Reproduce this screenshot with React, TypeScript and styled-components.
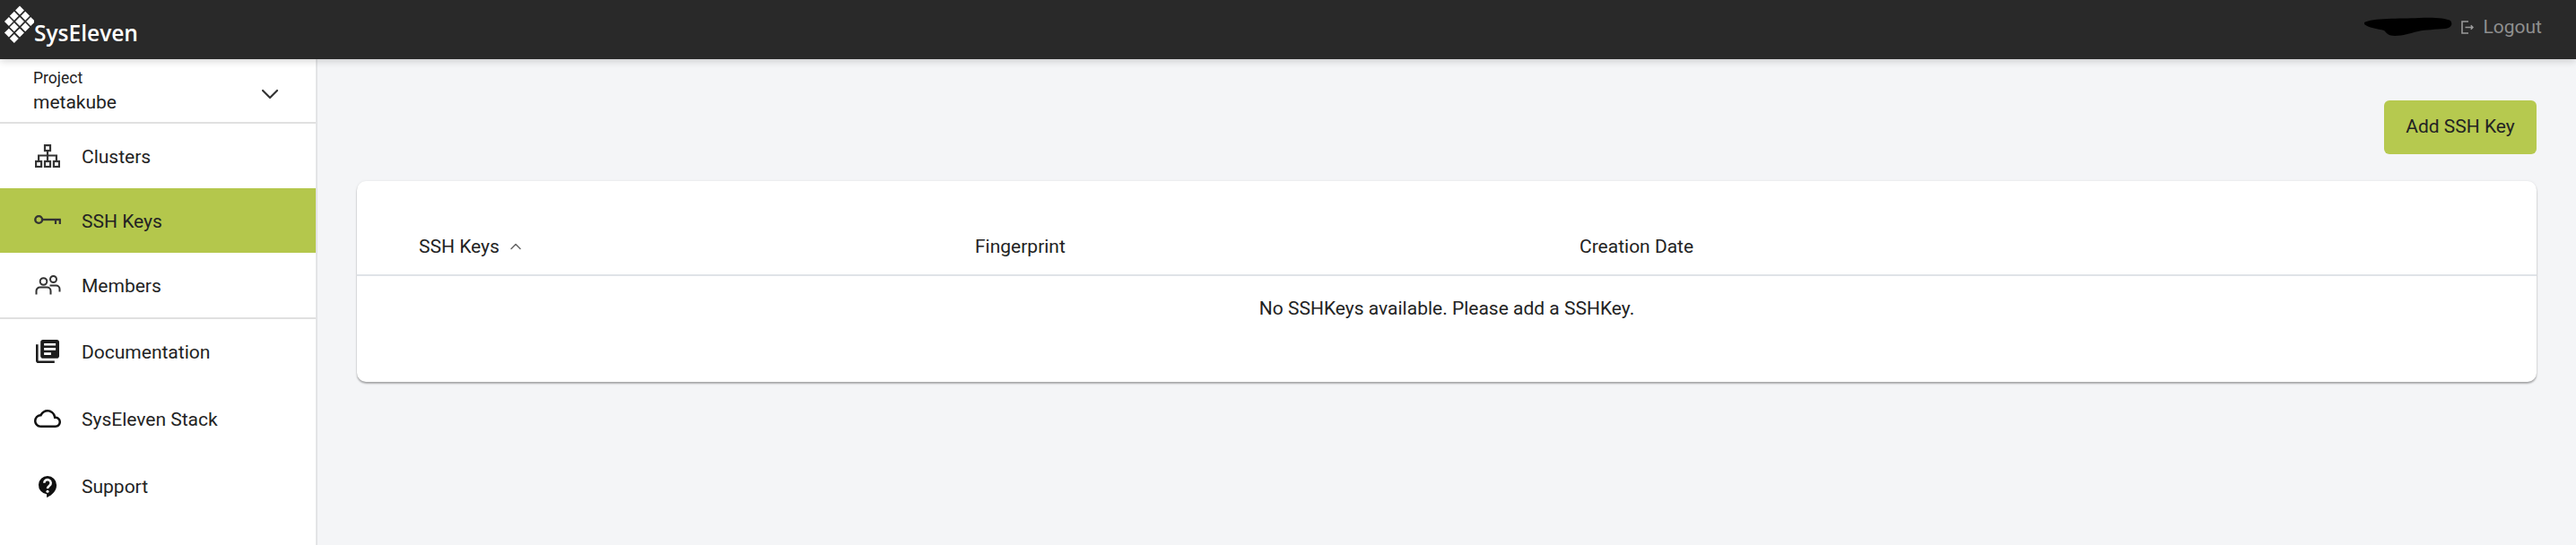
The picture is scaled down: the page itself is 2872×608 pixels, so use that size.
import { createGlobalStyle } from 'styled-components';
import styled from 'styled-components';
import { ChevronDown, ChevronUp } from 'lucide-react';
import type { ReactNode } from 'react';

const GlobalStyle = createGlobalStyle`
  html, body {
    margin: 0;
    padding: 0;
    height: 100%;
    background: #f4f5f7;
    font-family: Roboto, "Liberation Sans", sans-serif;
    color: #232323;
  }
  #root { height: 100%; }
`;

const ClustersIcon = () => (
  <svg width="28" height="26" viewBox="0 0 28 26" fill="none" stroke="#333" strokeWidth="2.200">
    <rect x="11" y="1.100" width="6" height="6" />
    <rect x="1.100" y="19" width="6" height="6" />
    <rect x="11" y="19" width="6" height="6" />
    <rect x="20.900" y="19" width="6" height="6" />
    <path d="M14 7v12M4.100 19v-6.500h19.800V19" />
  </svg>
);

const KeyIcon = () => (
  <svg width="30" height="14" viewBox="0 0 30 14" fill="none" stroke="#333" strokeWidth="2.400">
    <circle cx="5.200" cy="6" r="3.900" />
    <path d="M9 6h20.800" />
    <path d="M24 6v5M28.800 6v5" strokeWidth="2.200" />
  </svg>
);

const MembersIcon = () => (
  <svg width="29" height="22" viewBox="0 0 29 22" fill="none" stroke="#333" strokeWidth="2">
    <circle cx="9.500" cy="7" r="3.800" />
    <circle cx="20.500" cy="4.500" r="3.500" />
    <path d="M1.500 21.500v-4a4 4 0 0 1 4-4h8a4 4 0 0 1 4 4v4" />
    <path d="M16.500 11.500h7a4 4 0 0 1 4 4v3" />
  </svg>
);

const DocsIcon = () => (
  <svg width="26" height="26" viewBox="2 2 20 20" fill="#1c1c1c">
    <path d="M4 6H2v14c0 1.100.9 2 2 2h14v-2H4V6zm16-4H8c-1.100 0-2 .9-2 2v12c0 1.100.9 2 2 2h12c1.100 0 2-.9 2-2V4c0-1.100-.9-2-2-2zm-1 9H9V9h10v2zm-4 4H9v-2h6v2zm4-8H9V5h10v2z" />
  </svg>
);

const CloudIcon = () => (
  <svg width="30" height="20" viewBox="0 4 24 16" fill="#111">
    <path d="M19.350 10.040A7.490 7.490 0 0 0 12 4C9.110 4 6.600 5.640 5.350 8.040A5.994 5.994 0 0 0 0 14c0 3.310 2.690 6 6 6h13c2.760 0 5-2.240 5-5 0-2.640-2.050-4.780-4.650-4.960zM19 18H6c-2.210 0-4-1.790-4-4 0-2.050 1.530-3.760 3.560-3.970l1.070-.11.5-.95C8.080 7.140 9.940 6 12 6c2.620 0 4.880 1.860 5.390 4.430l.3 1.500 1.530.11c1.560.1 2.780 1.410 2.780 2.960 0 1.650-1.350 3-3 3z" />
  </svg>
);

const SupportIcon = () => (
  <svg width="22" height="25" viewBox="0 0 24 27">
    <path fill="#111" d="M12 1a11 11 0 0 0-1 21.950V27c3-1 12-6 12-15A11 11 0 0 0 12 1z" />
    <path fill="none" stroke="#fff" strokeWidth="2.800" d="M8 9.500a4 4 0 1 1 6.400 3.200c-1.600 1.200-2.400 1.800-2.400 3.600" />
    <circle cx="12" cy="19.800" r="1.700" fill="#fff" />
  </svg>
);

const LogoutIcon = () => (
  <svg width="14" height="15" viewBox="0 0 14 15" fill="none" stroke="#9a9a9a" strokeWidth="1.600">
    <path d="M8 1H1v13h7M4.500 7.500H13M10.800 5.200 13 7.500l-2.200 2.300" />
  </svg>
);

const RedactedMark = () => (
  <svg width="99" height="22" viewBox="0 0 99 22" fill="#000">
    <path d="M1 6C10 1 40 2 62 1c14-1 30 0 35 3 3 4 1 8-6 9-10 1-22 1-30 3-10 2-16 5-26 5-7 0-9-3-12-6C16 13 5 12 1 8z" />
  </svg>
);

// rows of the rotated square mark, top to bottom
const logoCells: [number, number][] = [
  [22, 11.500],
  [15.800, 17.700], [28.200, 17.700],
  [9.900, 24], [22, 24], [34.200, 24],
  [15.800, 30.300], [28.200, 30.300],
  [9.900, 36.600], [22, 36.600],
  [15.800, 43],
];

const Logo = () => (
  <LogoMark width="38" height="50" viewBox="0 0 38 50">
    {logoCells.map(([x, y]) => (
      <rect
        key={`${x}-${y}`}
        x={x - 3.500}
        y={y - 3.500}
        width="7"
        height="7"
        fill="#fff"
        transform={`rotate(45 ${x} ${y})`}
      />
    ))}
  </LogoMark>
);

interface NavItemProps {
  icon: ReactNode;
  label: string;
  active?: boolean;
  tall?: boolean;
}

const NavItem = ({ icon, label, active, tall }: NavItemProps) => (
  <NavRow $active={active} $tall={tall}>
    <NavIcon>{icon}</NavIcon>
    <NavLabel>{label}</NavLabel>
  </NavRow>
);

const App = () => (
  <>
    <GlobalStyle />
    <Page>
      <Header>
        <Brand>
          <Logo />
          <BrandName>SysEleven</BrandName>
        </Brand>
        <UserArea>
          <RedactedMark />
          <LogoutIcon />
          <LogoutLabel>Logout</LogoutLabel>
        </UserArea>
      </Header>
      <Body>
        <Sidebar>
          <ProjectPicker>
            <div>
              <ProjectCaption>Project</ProjectCaption>
              <ProjectName>metakube</ProjectName>
            </div>
            <PickerChevron>
              <ChevronDown size={32} color="#333" strokeWidth={1.600} />
            </PickerChevron>
          </ProjectPicker>
          <NavGroup>
            <NavItem icon={<ClustersIcon />} label="Clusters" />
            <NavItem icon={<KeyIcon />} label="SSH Keys" active />
            <NavItem icon={<MembersIcon />} label="Members" />
          </NavGroup>
          <NavItem icon={<DocsIcon />} label="Documentation" tall />
          <NavItem icon={<CloudIcon />} label="SysEleven Stack" tall />
          <NavItem icon={<SupportIcon />} label="Support" tall />
        </Sidebar>
        <Main>
          <Actions>
            <AddButton>Add SSH Key</AddButton>
          </Actions>
          <Card>
            <TableHead>
              <KeysColumn>
                SSH Keys
                <ChevronUp size={20} color="#666" strokeWidth={1.800} />
              </KeysColumn>
              <FingerprintColumn>Fingerprint</FingerprintColumn>
              <DateColumn>Creation Date</DateColumn>
            </TableHead>
            <EmptyText>No SSHKeys available. Please add a SSHKey.</EmptyText>
          </Card>
        </Main>
      </Body>
    </Page>
  </>
);

export default App;

const Page = styled.div`
  display: flex;
  flex-direction: column;
  height: 608px;
  overflow: hidden;
`;

const Header = styled.header`
  position: relative;
  z-index: 2;
  display: flex;
  align-items: center;
  justify-content: space-between;
  flex: 0 0 66px;
  box-sizing: border-box;
  padding: 0 38px 6px 0;
  background: #292929;
  box-shadow: 0 2px 8px rgba(0, 0, 0, 0.18);
`;

const Brand = styled.div`
  display: flex;
  align-items: flex-start;
  align-self: flex-start;
`;

const LogoMark = styled.svg`
  flex: none;
`;

const BrandName = styled.span`
  margin-top: 20px;
  font-family: "Open Sans", sans-serif;
  font-size: 24.500px;
  font-weight: 600;
  line-height: 34px;
  color: #fff;
`;

const UserArea = styled.div`
  display: flex;
  align-items: center;
  gap: 10px;
`;

const LogoutLabel = styled.span`
  font-size: 21px;
  color: #8f8f8f;
`;

const Body = styled.div`
  display: flex;
  flex: 1;
  min-height: 0;
`;

const Sidebar = styled.aside`
  flex: 0 0 352px;
  background: #fff;
  border-right: 2px solid #e3e4e6;
`;

const ProjectPicker = styled.div`
  display: flex;
  align-items: center;
  justify-content: space-between;
  box-sizing: border-box;
  height: 72px;
  padding: 2px 35px 0 37px;
  border-bottom: 2px solid #e0e0e0;
`;

const PickerChevron = styled.span`
  display: flex;
  margin-top: 6px;
`;

const ProjectCaption = styled.div`
  font-size: 17.500px;
  line-height: 24px;
`;

const ProjectName = styled.div`
  font-size: 21px;
  line-height: 30px;
`;

const NavGroup = styled.nav`
  border-bottom: 2px solid #e0e0e0;
`;

const NavRow = styled.div<{ $active?: boolean; $tall?: boolean }>`
  display: flex;
  align-items: center;
  box-sizing: border-box;
  height: ${({ $tall }) => ($tall ? '75px' : '72px')};
  padding-left: 37px;
  padding-bottom: ${({ $tall }) => ($tall ? '3px' : '0')};
  background: ${({ $active }) => ($active ? '#b4c74c' : 'transparent')};
`;

const NavIcon = styled.span`
  display: flex;
  align-items: center;
  justify-content: center;
  width: 32px;
  margin-right: 22px;
`;

const NavLabel = styled.span`
  padding-top: 2px;
  font-size: 21px;
`;

const Main = styled.main`
  flex: 1;
  min-width: 0;
  padding: 46px 44px 0 44px;
`;

const Actions = styled.div`
  display: flex;
  justify-content: flex-end;
  margin-bottom: 30px;
`;

const AddButton = styled.button`
  width: 170px;
  height: 60px;
  padding: 0 0 2px;
  border: 0;
  border-radius: 6px;
  background: #b6c94f;
  font-family: inherit;
  font-size: 21px;
  color: #232323;
`;

const Card = styled.section`
  height: 224px;
  box-sizing: border-box;
  border-radius: 10px;
  background: #fff;
  box-shadow: 0 2px 2px rgba(0, 0, 0, 0.3), 0 0 3px rgba(0, 0, 0, 0.08);
`;

const TableHead = styled.div`
  display: flex;
  align-items: flex-end;
  box-sizing: border-box;
  height: 106px;
  padding: 0 0 17px 69px;
  border-bottom: 2px solid #dfe3e7;
  font-size: 21px;
  line-height: 28px;
`;

const KeysColumn = styled.div`
  display: flex;
  align-items: center;
  gap: 8px;
  width: 620px;
`;

const FingerprintColumn = styled.div`
  width: 674px;
`;

const DateColumn = styled.div``;

const EmptyText = styled.div`
  padding-top: 22px;
  text-align: center;
  font-size: 21px;
  line-height: 28px;
`;
